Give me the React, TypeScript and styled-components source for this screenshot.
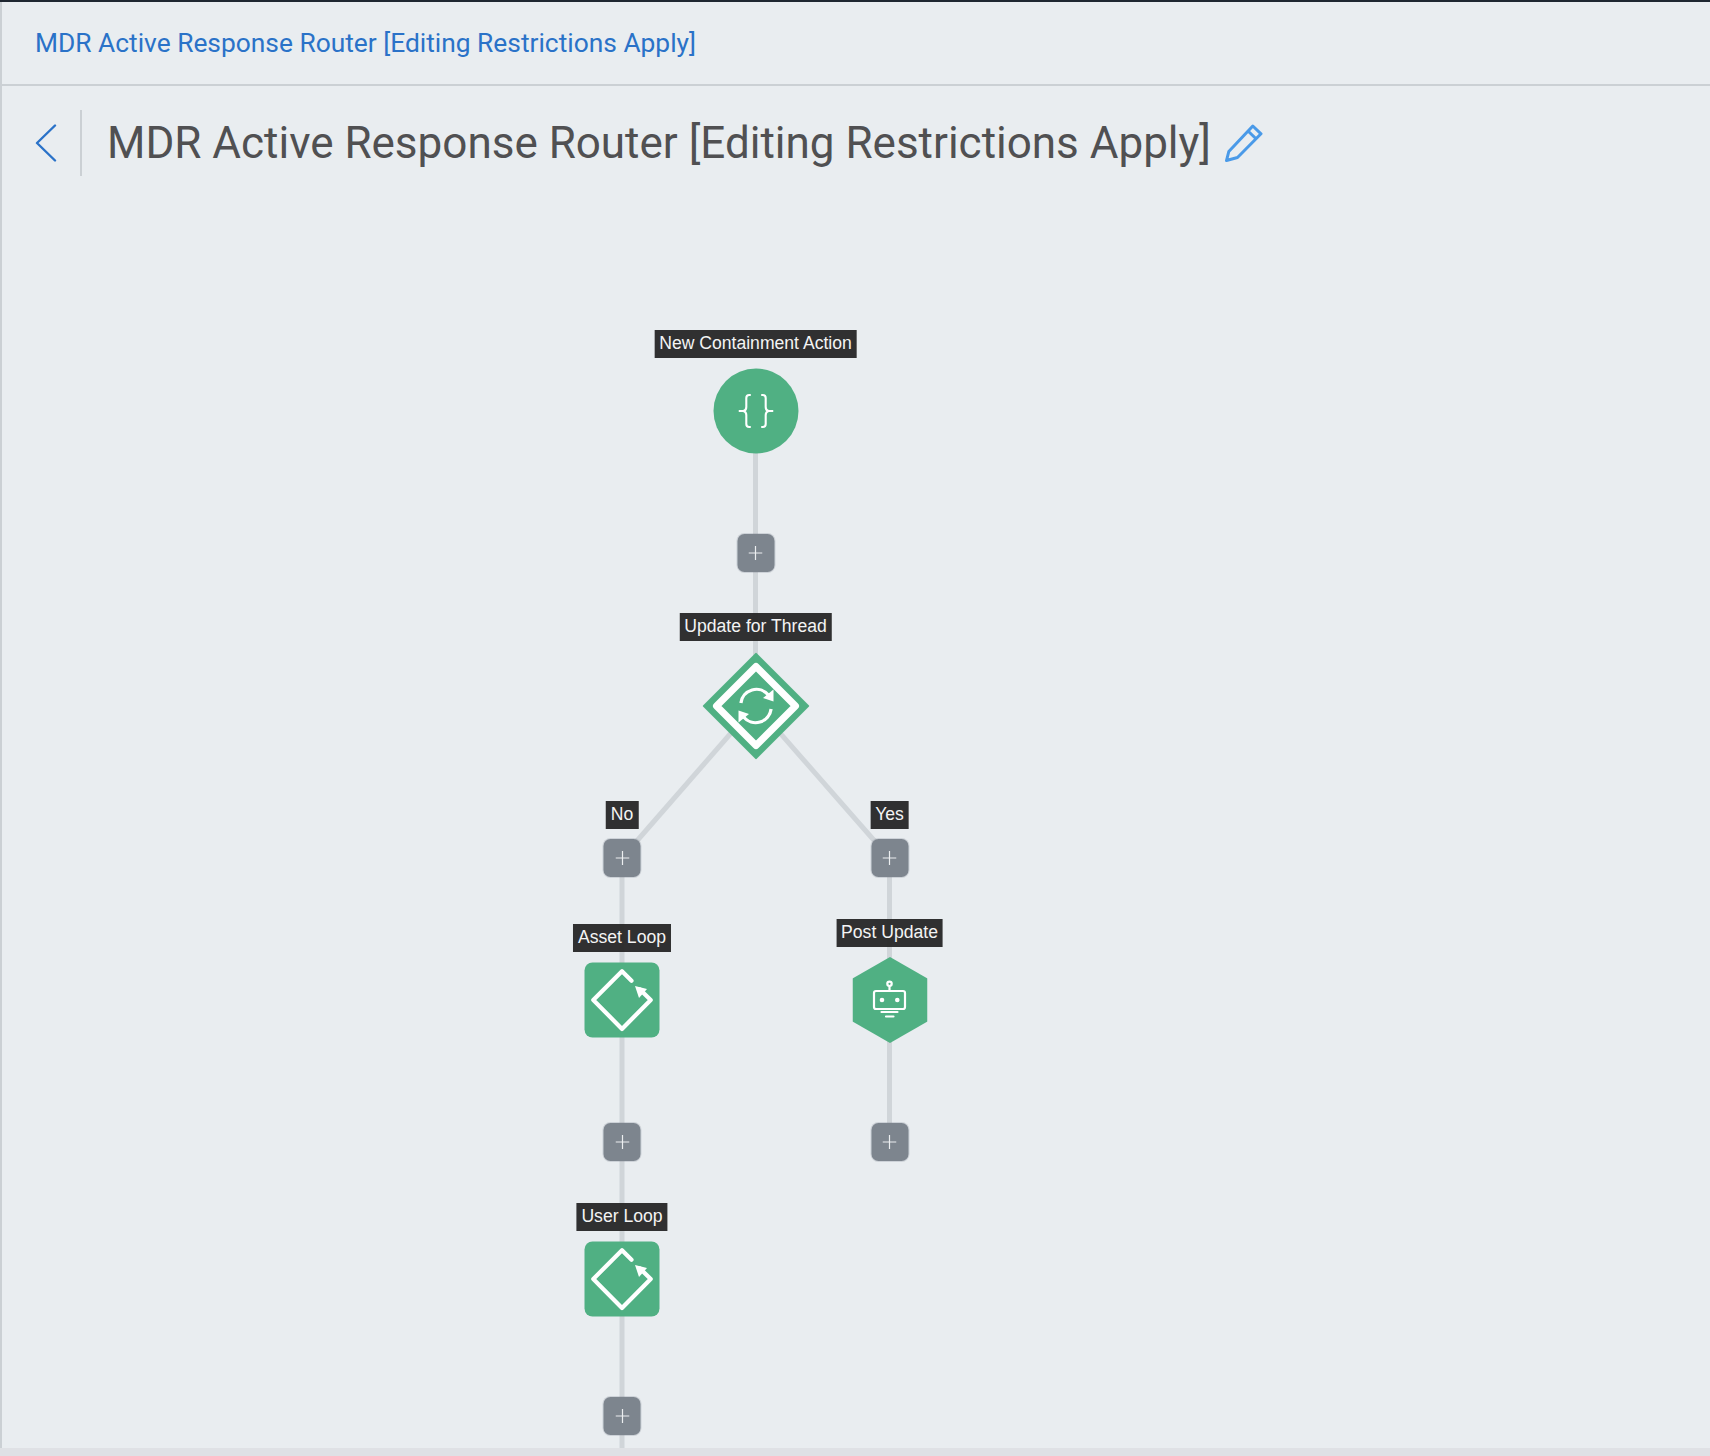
import React from "react";
import styled, { createGlobalStyle } from "styled-components";

const GlobalStyle = createGlobalStyle`
  html, body { margin: 0; padding: 0; background: #e9edf0; }
  #root { min-height: 1456px; }
`;

const Page = styled.div`
  width: 1710px;
  height: 1456px;
  display: flex;
  flex-direction: column;
  box-sizing: border-box;
  border-top: 2px solid #1f2731;
  background: #e9edf0;
  font-family: Roboto, "Liberation Sans", sans-serif;
  overflow: hidden;
`;

const Main = styled.main`
  flex: 1;
  min-height: 0;
  display: flex;
  flex-direction: column;
  border-left: 2px solid #cbd0d4;
`;

const Footer = styled.div`
  height: 8px;
  flex: none;
  background: #dfe1e5;
`;

const Breadcrumb = styled.header`
  height: 82px;
  flex: none;
  display: flex;
  align-items: center;
  box-sizing: content-box;
  padding-left: 33px;
  border-bottom: 2px solid #cbd0d4;
  font-size: 26.35px;
  color: #2a72c8;
`;

const TitleBar = styled.div`
  height: 116px;
  flex: none;
  display: flex;
  align-items: flex-start;
  padding: 24px 0 0 33px;
  box-sizing: border-box;
`;

const BackButton = styled.button`
  width: 45px;
  height: 66px;
  padding: 0;
  border: none;
  border-right: 2px solid #cbd0d4;
  background: none;
  display: flex;
  align-items: center;
  justify-content: flex-start;
  box-sizing: content-box;
`;

const Title = styled.h1`
  margin: 0 0 0 25px;
  height: 66px;
  line-height: 67px;
  font-size: 44px;
  font-weight: 400;
  color: #505052;
  white-space: nowrap;
`;

const EditButton = styled.button`
  margin: 14px 0 0 14px;
  padding: 0;
  border: none;
  background: none;
  line-height: 0;
`;

const Canvas = styled.section`
  position: relative;
  flex: 1;
  min-height: 0;
`;

const Edges = styled.svg`
  position: absolute;
  left: 0;
  top: 0;
  width: 100%;
  height: 100%;
`;

const Anchor = styled.div<{ $x: number; $y: number }>`
  position: absolute;
  left: ${(p) => p.$x}px;
  top: ${(p) => p.$y}px;
  transform: translate(-50%, -50%);
  line-height: 0;
`;

const Label = styled.div<{ $x: number; $y: number }>`
  position: absolute;
  left: ${(p) => p.$x}px;
  top: ${(p) => p.$y}px;
  transform: translateX(-50%);
  height: 28px;
  padding: 0 5px 2px;
  box-sizing: border-box;
  display: flex;
  align-items: center;
  background: rgba(38, 38, 38, 0.95);
  color: #f4f4f4;
  font-family: "Liberation Sans", Arial, sans-serif;
  font-size: 17.6px;
  white-space: nowrap;
`;

const AddStep = styled.button<{ $x: number; $y: number }>`
  position: absolute;
  left: ${(p) => p.$x}px;
  top: ${(p) => p.$y}px;
  transform: translate(-50%, -50%);
  width: 37px;
  height: 38px;
  padding: 0;
  border: none;
  border-radius: 7px;
  background: #7d858e;
  box-shadow: 0 0 0 1px rgba(125, 133, 142, 0.25);
  display: flex;
  align-items: center;
  justify-content: center;
`;

const CircleNode = styled.div<{ $x: number; $y: number }>`
  position: absolute;
  left: ${(p) => p.$x}px;
  top: ${(p) => p.$y}px;
  transform: translate(-50%, -50%);
  width: 85px;
  height: 85px;
  border-radius: 50%;
  background: #50b083;
  display: flex;
  align-items: center;
  justify-content: center;
`;

const SquareNode = styled.div<{ $x: number; $y: number }>`
  position: absolute;
  left: ${(p) => p.$x}px;
  top: ${(p) => p.$y}px;
  transform: translate(-50%, -50%);
  width: 75px;
  height: 75px;
  border-radius: 8px;
  background: #50b083;
  line-height: 0;
`;

const LEFT = 2;
const TOP = 202;
const cx = (x: number) => x - LEFT;
const cy = (y: number) => y - TOP;

const edges: [number, number, number, number][] = [
  [755.5, 410, 755.5, 705],
  [755.5, 705, 622, 858],
  [755.5, 705, 889.5, 858],
  [622, 858, 622, 1448],
  [889.5, 858, 889.5, 1142],
];

const addSteps: [number, number][] = [
  [755.5, 553],
  [622, 858],
  [889.5, 858],
  [622, 1142],
  [889.5, 1142],
  [622, 1415.5],
];

const labels: [string, number, number][] = [
  ["New Containment Action", 755.5, 330],
  ["Update for Thread", 755.5, 613],
  ["No", 622, 801],
  ["Yes", 889.5, 801],
  ["Asset Loop", 622, 924],
  ["Post Update", 889.5, 919],
  ["User Loop", 622, 1203],
];

const PlusIcon = () => (
  <svg width="14" height="14" viewBox="0 0 14 14" fill="none" stroke="#eceef0" strokeWidth="1.2">
    <path d="M7 0v14M0 7h14" />
  </svg>
);

const BracesIcon = () => (
  <svg width="35" height="35" viewBox="0 0 35 35" fill="none" stroke="#fff" strokeWidth="2.1" strokeLinecap="round">
    <path d="M11.5 1.5h-.8c-1.8 0-2.9 1-2.9 2.9v9c0 2.4-1 3.7-3 4.1h-4M4.8 17.5c2 .4 3 1.7 3 4.1v9c0 1.9 1.1 2.9 2.9 2.9h.8" />
    <path d="M23.5 1.5h.8c1.8 0 2.9 1 2.9 2.9v9c0 2.4 1 3.7 3 4.1h4M30.2 17.5c-2 .4-3 1.7-3 4.1v9c0 1.9-1.1 2.9-2.9 2.9h-.8" />
  </svg>
);

const DecisionIcon = () => (
  <svg width="107" height="107" viewBox="0 0 107 107">
    <polygon points="53.5,0 107,53.5 53.5,107 0,53.5" fill="#50b083" />
    <polygon points="53.5,14 93,53.5 53.5,93 14,53.5" fill="none" stroke="#fff" strokeWidth="7" strokeLinejoin="round" />
    <g fill="none" stroke="#fff" strokeWidth="3.3">
      <path d="M38.4 50.5a15.6 15.6 0 0 1 27.5-8" />
      <path d="M68.6 56.5a15.6 15.6 0 0 1-27.5 8" />
    </g>
    <polygon points="71,37 71,49 60.5,45.5" fill="#fff" />
    <polygon points="36,70 36,58 46.5,61.5" fill="#fff" />
  </svg>
);

const LoopIcon = () => (
  <svg width="75" height="75" viewBox="0 0 75 75">
    <path
      d="M47 18.3 37.5 8.8 8.8 37.5 37.5 66.4 66.2 37.5 55.5 27"
      fill="none"
      stroke="#fff"
      strokeWidth="4.2"
      strokeLinecap="round"
      strokeLinejoin="round"
    />
    <polygon points="50.5,23.5 62.5,26.5 54.5,35.5" fill="#fff" />
  </svg>
);

const BotIcon = () => (
  <svg width="75" height="86" viewBox="0 0 75 86">
    <polygon points="37.5,0 75,21.5 75,64.5 37.5,86 0,64.5 0,21.5" fill="#50b083" />
    <g fill="none" stroke="#fff" strokeWidth="2.2" strokeLinecap="round">
      <rect x="21.5" y="34" width="31" height="18" rx="2" />
      <circle cx="37" cy="26.8" r="2.2" />
      <path d="M37 29v5M29 55h16M33.5 59.5h7.5" />
    </g>
    <circle cx="29.5" cy="43" r="2.3" fill="#fff" />
    <circle cx="44.8" cy="43" r="2.3" fill="#fff" />
  </svg>
);

export default function App() {
  return (
    <>
      <GlobalStyle />
      <Page>
        <Main>
          <Breadcrumb>MDR Active Response Router [Editing Restrictions Apply]</Breadcrumb>
          <TitleBar>
            <BackButton aria-label="Back">
              <svg width="22" height="38" viewBox="0 0 22 38" fill="none" stroke="#2a72c8" strokeWidth="2.4" strokeLinecap="round" strokeLinejoin="round">
                <path d="M20 1.5 2 19l18 17.5" />
              </svg>
            </BackButton>
            <Title>MDR Active Response Router [Editing Restrictions Apply]</Title>
            <EditButton aria-label="Edit">
              <svg width="38" height="38" viewBox="0 0 38 38" fill="none" stroke="#4a9ae8" strokeWidth="3" strokeLinejoin="round">
                <path d="M1.5 36.5 3.8 27.5 27.8 2 36 9.8 12.5 33.5Z" />
                <path d="M23 7l8.3 8" />
              </svg>
            </EditButton>
          </TitleBar>
          <Canvas>
            <Edges>
              {edges.map(([x1, y1, x2, y2], i) => (
                <line key={i} x1={cx(x1)} y1={cy(y1)} x2={cx(x2)} y2={cy(y2)} stroke="#d0d5d9" strokeWidth="5" />
              ))}
            </Edges>
            {addSteps.map(([x, y], i) => (
              <AddStep key={i} $x={cx(x)} $y={cy(y)} aria-label="Add step">
                <PlusIcon />
              </AddStep>
            ))}
            <CircleNode $x={cx(755.5)} $y={cy(410.5)}>
              <BracesIcon />
            </CircleNode>
            <Anchor $x={cx(755.5)} $y={cy(705.5)}>
              <DecisionIcon />
            </Anchor>
            <SquareNode $x={cx(621.5)} $y={cy(1000)}>
              <LoopIcon />
            </SquareNode>
            <Anchor $x={cx(889.5)} $y={cy(1000)}>
              <BotIcon />
            </Anchor>
            <SquareNode $x={cx(621.5)} $y={cy(1278.5)}>
              <LoopIcon />
            </SquareNode>
            {labels.map(([text, x, y]) => (
              <Label key={text} $x={cx(x)} $y={cy(y)}>
                {text}
              </Label>
            ))}
          </Canvas>
        </Main>
        <Footer />
      </Page>
    </>
  );
}
